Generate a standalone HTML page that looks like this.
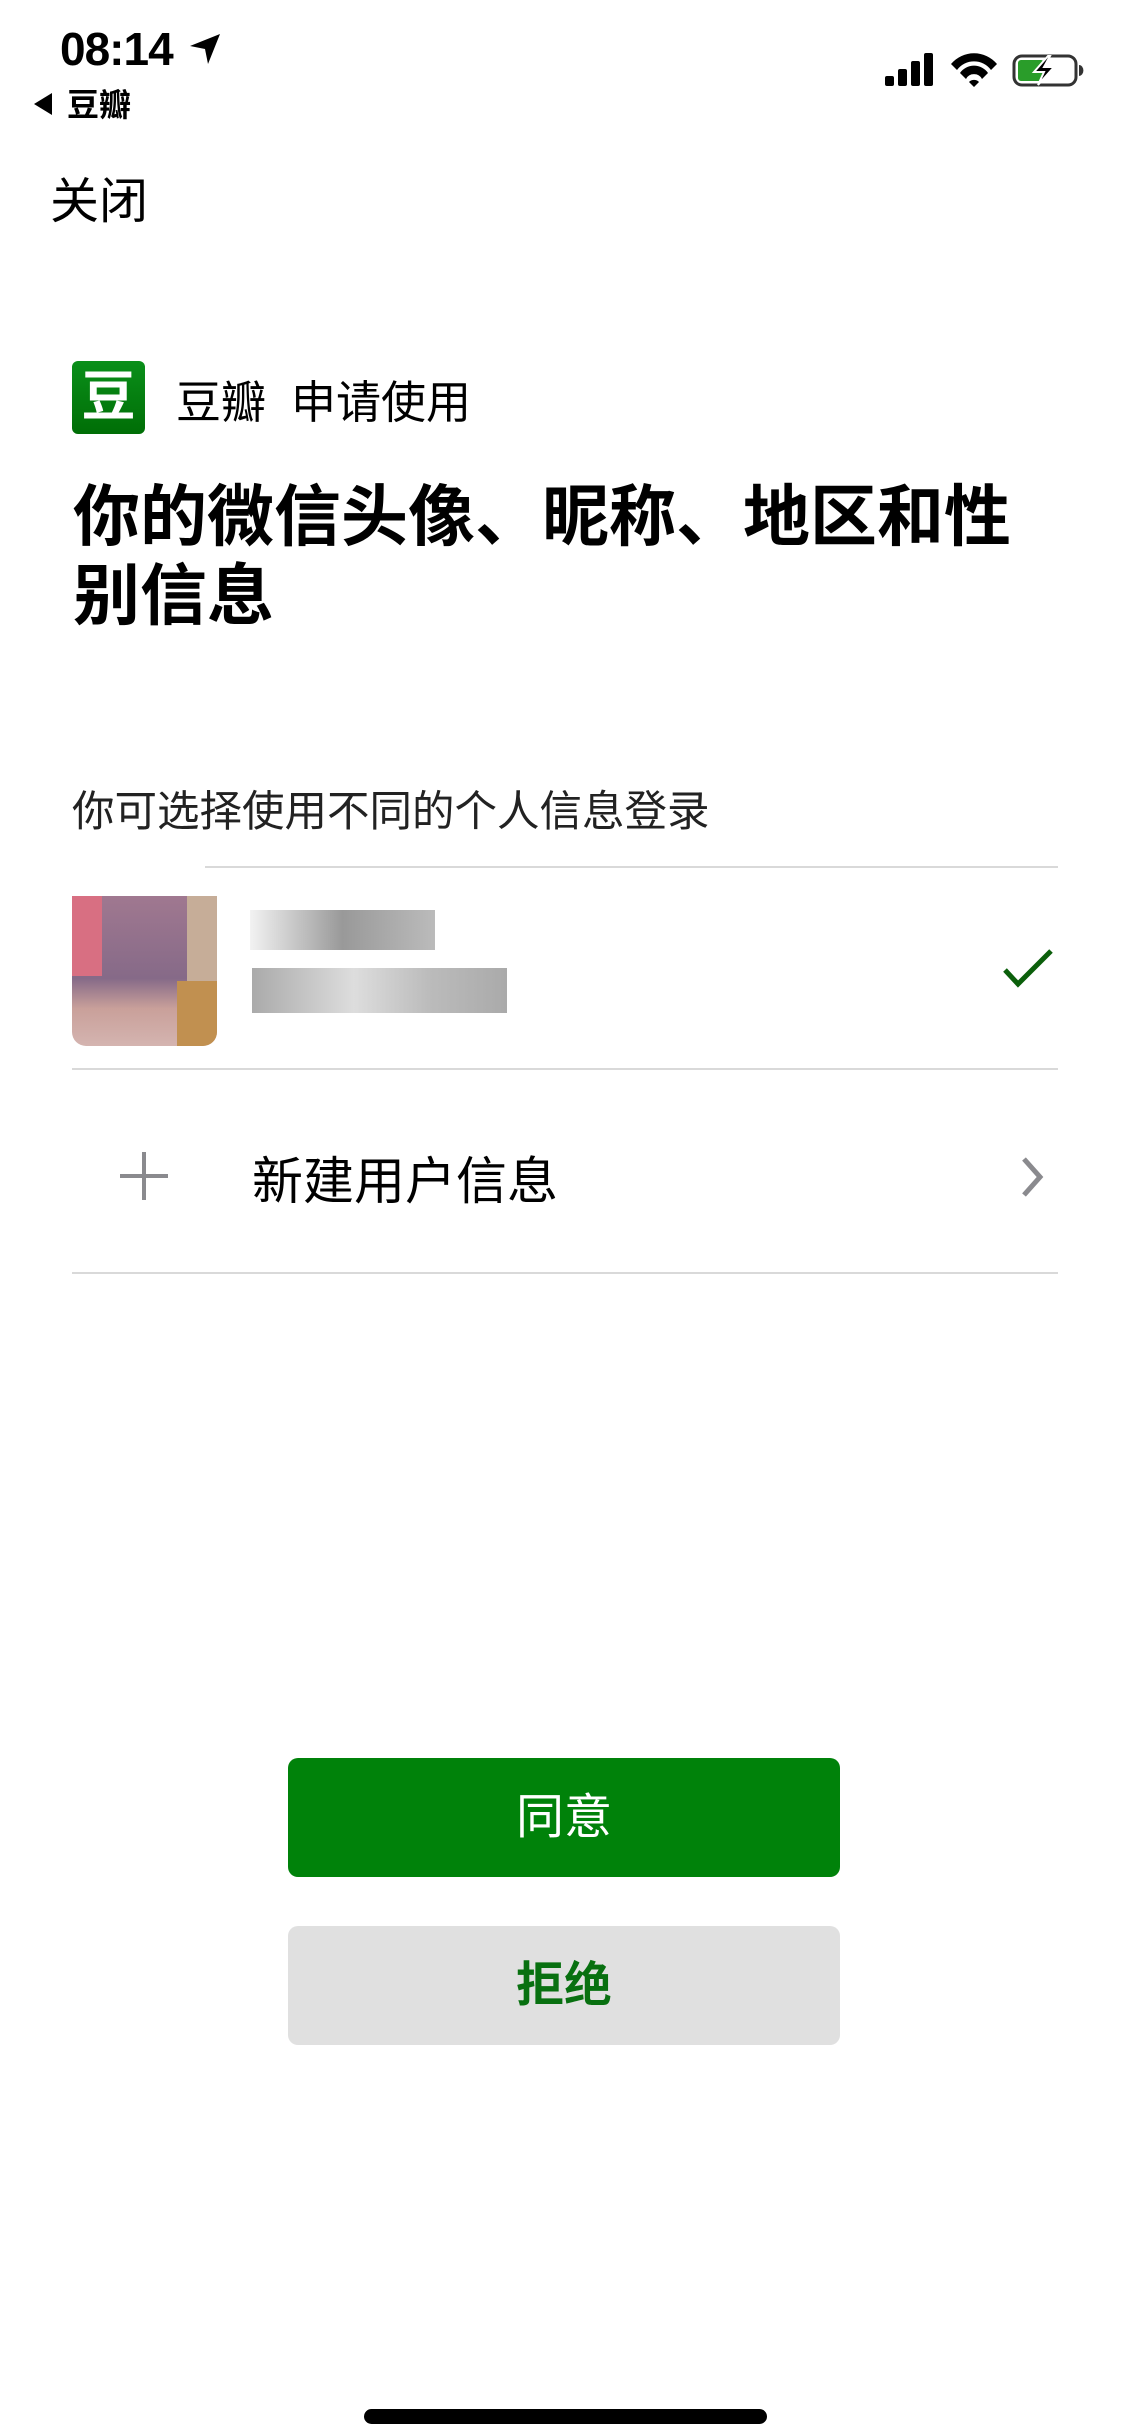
<!DOCTYPE html>
<html><head><meta charset="utf-8"><style>
*{margin:0;padding:0;box-sizing:border-box}
body{width:1125px;height:2436px;background:#fff;position:relative;overflow:hidden;font-family:"Liberation Sans","Noto Sans CJK SC",sans-serif;color:#000}
.a{position:absolute;white-space:nowrap}
.line{position:absolute;height:2px;background:#d9d9d9}
</style></head><body>
<div class="a" style="left:60px;top:22px;font-size:46px;font-weight:bold;letter-spacing:-1px">08:14</div>
<svg class="a" style="left:188px;top:32px" width="34" height="34" viewBox="0 0 34 34"><path d="M32 2 L2 14 L17 17 L20 32 Z" fill="#000"/></svg>
<svg class="a" style="left:32px;top:92px" width="22" height="24"><path d="M20 1 L2 12 L20 23Z" fill="#000"/></svg>
<div class="a" style="left:67px;top:80px;font-size:32px;font-weight:bold">豆瓣</div>
<svg class="a" style="left:884px;top:52px" width="210" height="36" viewBox="0 0 210 36">
<rect x="1" y="24" width="9" height="10" rx="2"/><rect x="14" y="17" width="9" height="17" rx="2"/><rect x="27" y="9" width="9" height="25" rx="2"/><rect x="40" y="1" width="9" height="33" rx="2"/>
<path d="M67 12 A30 30 0 0 1 113 12 L107 18 A21 21 0 0 0 73 18Z M76 21 A17 17 0 0 1 104 21 L98 27 A9 9 0 0 0 82 27Z M85 30 L90 35 L95 30 A7 7 0 0 0 85 30Z"/>
<rect x="130" y="4" width="62" height="29" rx="8" fill="none" stroke="#333" stroke-width="3"/>
<rect x="134" y="8" width="26" height="21" rx="3" fill="#2a9d2a"/>
<path d="M195 13 v11 a4 5 0 0 0 0 -11z" fill="#333"/>
<path d="M164 4 L150 20 L160 20 L154 33 L170 15 L160 15 L166 4Z" fill="#000" stroke="#fff" stroke-width="2"/>
</svg>
<div class="a" style="left:50px;top:162px;font-size:49px">关闭</div>
<div class="a" style="left:72px;top:361px;width:73px;height:73px;border-radius:6px;background:linear-gradient(#0a8f1a,#006e06);color:#fff;font-size:54px;font-weight:bold;text-align:center;line-height:73px">豆</div>
<div class="a" style="left:176px;top:366px;font-size:45px">豆瓣&nbsp;&nbsp;申请使用</div>
<div class="a" style="left:73px;top:478px;font-size:67px;font-weight:bold;line-height:79px">你的微信头像、昵称、地区和性<br>别信息</div>
<div class="a" style="left:72px;top:778px;font-size:42.5px;color:#222">你可选择使用不同的个人信息登录</div>
<div class="line" style="left:205px;top:866px;width:853px"></div>
<div class="a" style="left:72px;top:896px;width:145px;height:150px;border-radius:0 0 14px 14px;overflow:hidden;background:linear-gradient(#a07890,#866a88 55%,#c9a09a 75%,#d4b4b0)">
<div style="position:absolute;left:0;top:0;width:30px;height:80px;background:#d86f82"></div>
<div style="position:absolute;right:0;top:0;width:30px;height:100px;background:#c6ad98"></div>
<div style="position:absolute;right:0;bottom:0;width:40px;height:65px;background:#c19050"></div></div>
<div class="a" style="left:250px;top:910px;width:185px;height:40px;background:linear-gradient(90deg,#f2f2f2,#999 50%,#bbb)"></div>
<div class="a" style="left:252px;top:968px;width:255px;height:45px;background:linear-gradient(90deg,#aaa,#ddd 40%,#bbb 70%,#aaa)"></div>
<svg class="a" style="left:1002px;top:948px" width="52" height="40"><path d="M3 22 L16 36 L49 3" fill="none" stroke="#0b5f0b" stroke-width="5"/></svg>
<div class="line" style="left:72px;top:1068px;width:986px"></div>
<svg class="a" style="left:118px;top:1150px" width="52" height="52"><path d="M26 2V50M2 26H50" stroke="#8a8a8e" stroke-width="4"/></svg>
<div class="a" style="left:252px;top:1140px;font-size:51px">新建用户信息</div>
<svg class="a" style="left:1018px;top:1155px" width="30" height="44"><path d="M6 4 L22 22 L6 40" fill="none" stroke="#8a8a8e" stroke-width="5"/></svg>
<div class="line" style="left:72px;top:1272px;width:986px"></div>
<div class="a" style="left:288px;top:1758px;width:552px;height:119px;border-radius:10px;background:#00820a;color:#fff;font-size:48px;text-align:center;line-height:119px">同意</div>
<div class="a" style="left:288px;top:1926px;width:552px;height:119px;border-radius:10px;background:#e0e0e0;color:#087010;font-size:48px;font-weight:bold;text-align:center;line-height:119px">拒绝</div>
<div class="a" style="left:364px;top:2409px;width:403px;height:15px;border-radius:8px;background:#000"></div>
</body></html>
